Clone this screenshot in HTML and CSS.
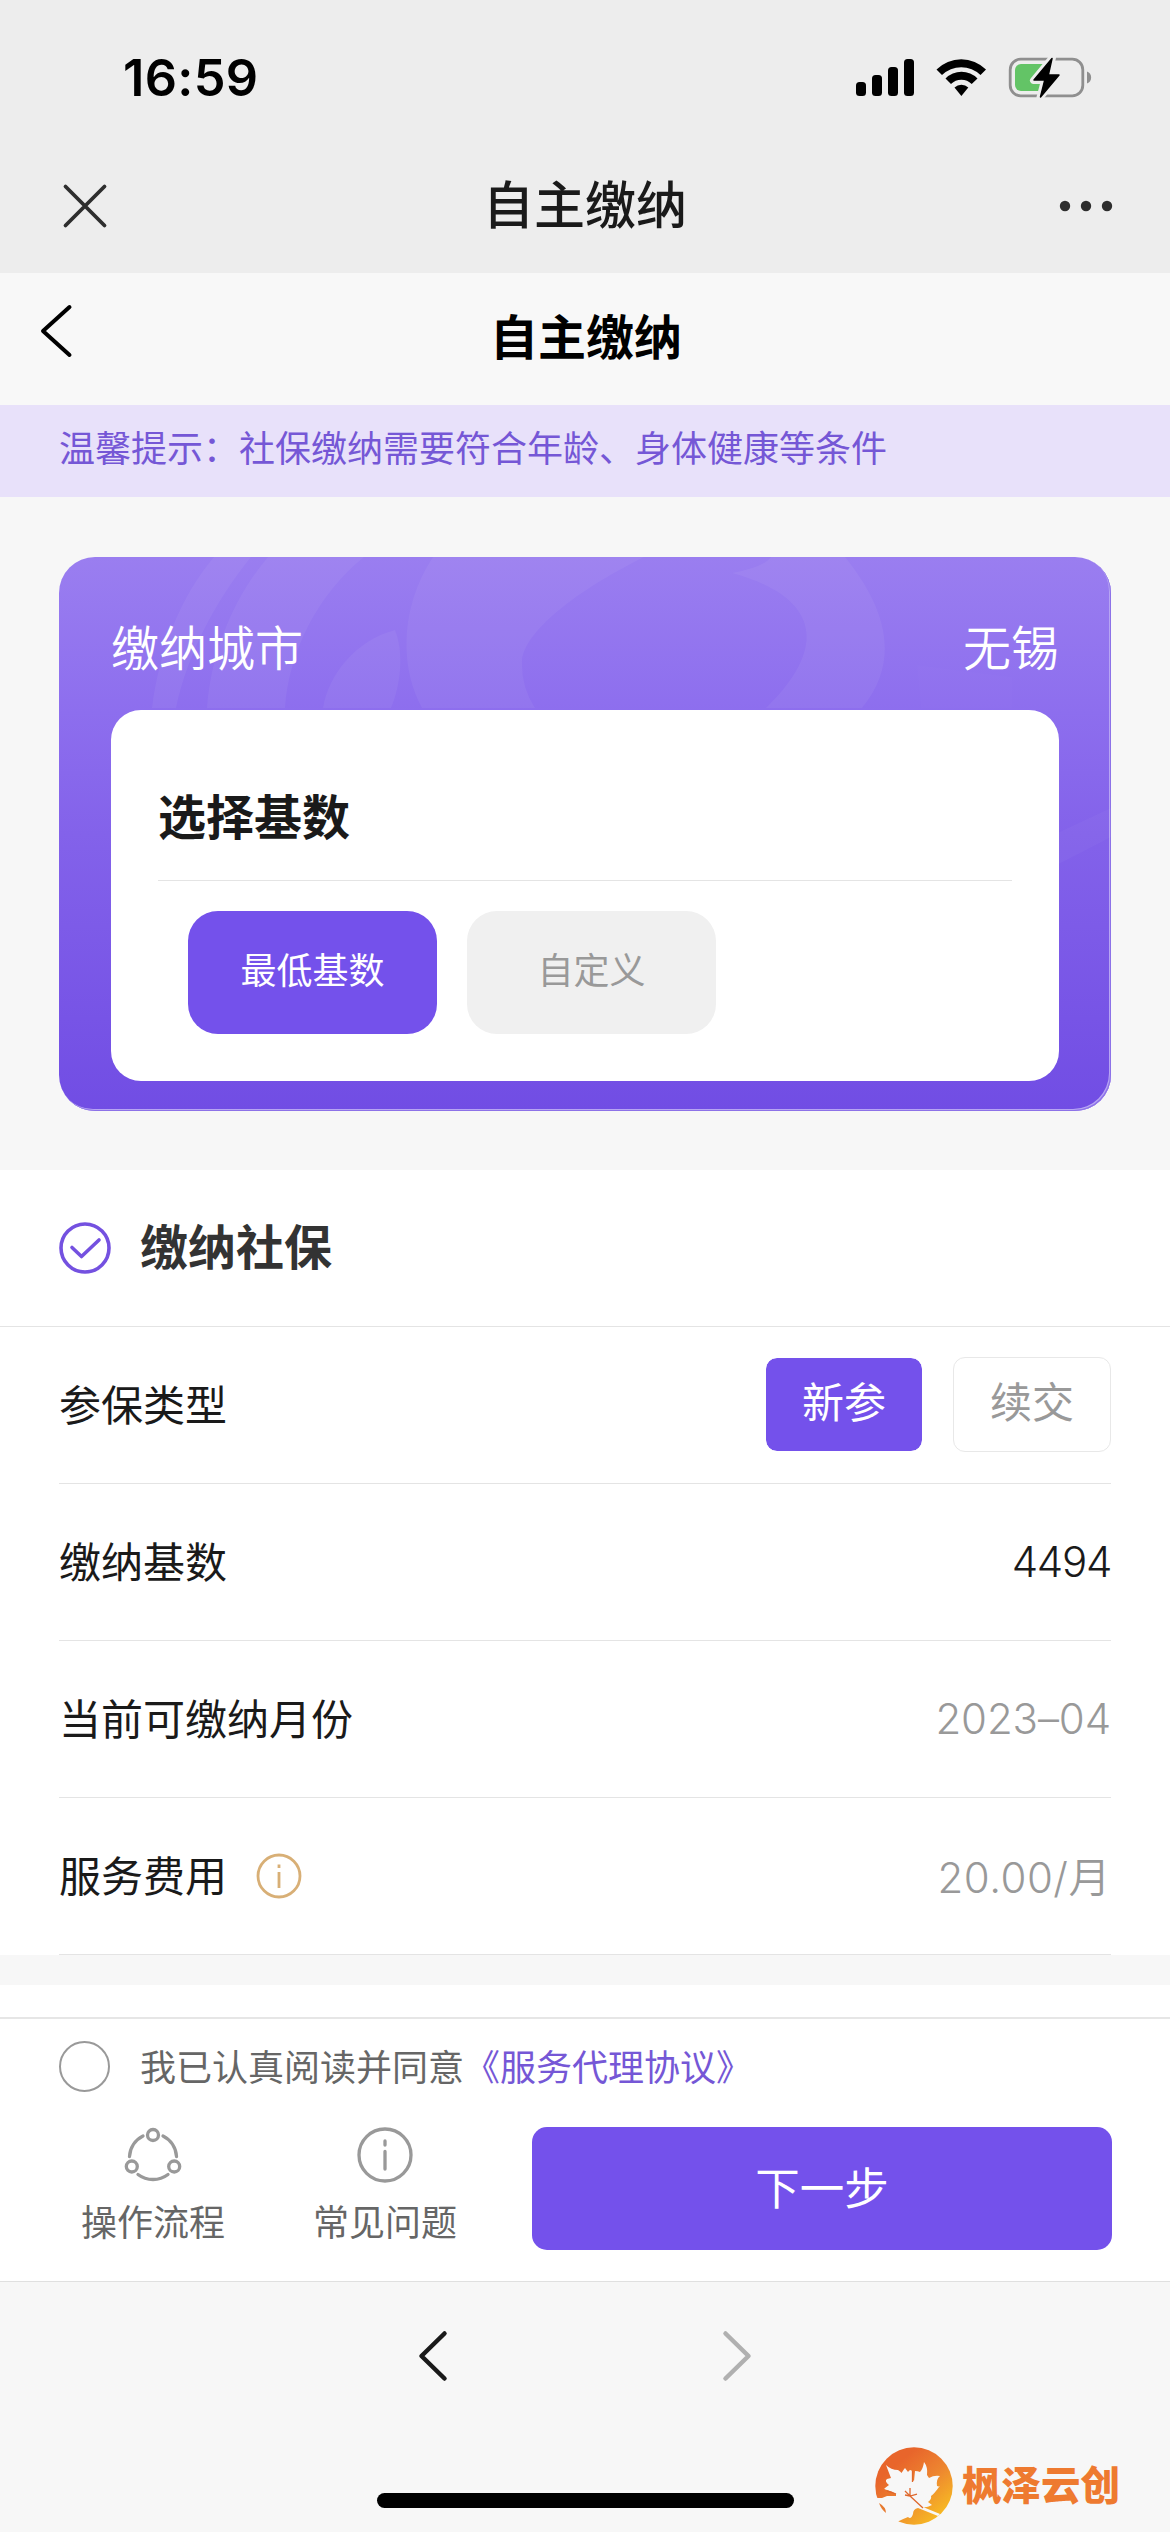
FILE: index.html
```html
<!DOCTYPE html>
<html lang="zh-CN">
<head>
<meta charset="utf-8">
<title>自主缴纳</title>
<link rel="stylesheet" href="styles.css">
</head>
<body>
<div class="screen">
  <header class="top">
    <div class="status">
      <span class="time">16:59</span>
      <svg class="status-icons" width="240" height="48" viewBox="0 0 240 48">
        <rect x="0" y="28" width="10" height="14" rx="3.5"/>
        <rect x="16" y="21" width="10" height="21" rx="3.5"/>
        <rect x="32" y="13" width="10" height="29" rx="3.5"/>
        <rect x="48" y="5" width="10" height="37" rx="3.5"/>
        <path d="M80.500 15.500A35 35 0 0 1 130 15.500L124.500 21A27.500 27.500 0 0 0 86 21Z"/>
        <path d="M89.500 24.500A22.500 22.500 0 0 1 121.500 24.500L115.700 30A14.500 14.500 0 0 0 95 30Z"/>
        <path d="M98.500 33.500A10 10 0 0 1 112.300 33.500L105.400 42Z"/>
        <rect x="154.200" y="5.200" width="72.600" height="36.600" rx="10.500" fill="none" stroke="#8f8f8f" stroke-width="2.800"/>
        <rect x="159" y="10" width="34" height="27" rx="6" fill="#63c466"/>
        <path d="M231 17.500C236.500 19 236.500 28 231 29.500Z" fill="#8f8f8f"/>
        <path d="M196.500 3.500L177.500 26.500H188.500L184 43.500L203.500 20.500H192.500Z" fill="#000" stroke="#ededed" stroke-width="7" stroke-linejoin="round"/>
        <path d="M196 4.500L178 26H188.800L184.500 43L203 21H192.300Z" stroke="#000" stroke-width="1.500" stroke-linejoin="round"/>
      </svg>
    </div>
    <div class="wx-bar">
      <svg class="close" width="48" height="48" viewBox="0 0 48 48"><path d="M4.500 4.500L43.500 43.500M43.500 4.500L4.500 43.500"/></svg>
      <span class="wx-title">自主缴纳</span>
      <svg class="dots" width="56" height="12" viewBox="0 0 56 12"><circle cx="7" cy="6" r="5.200"/><circle cx="28" cy="6" r="5.200"/><circle cx="49" cy="6" r="5.200"/></svg>
    </div>
  </header>
  <nav class="nav">
    <svg class="nav-back" width="34" height="56" viewBox="0 0 34 56"><path d="M30.500 4L4 28L30.500 52"/></svg>
    <span class="nav-title">自主缴纳</span>
  </nav>
  <div class="notice">温馨提示：社保缴纳需要符合年龄、身体健康等条件</div>
  <main class="main">
    <section class="card">
      <svg class="card-art" width="1052" height="554" viewBox="0 0 1052 554">
        <path d="M155 0H192C158 42 129 95 117 151H93C100 95 121 40 155 0Z"/>
        <path d="M209 0H305C258 38 230 95 226 151H148C152 95 175 40 209 0Z"/>
        <path d="M336 73C345 95 342 127 332 151H264C269 118 297 83 336 73Z"/>
        <path d="M374 0H585C525 30 468 70 463 103Q462 130 476 151H363C338 105 344 45 374 0Z"/>
        <path d="M673 16Q705 10 712 0H786C818 40 848 96 803 151H707C764 96 768 42 673 16Z"/>
        <path d="M858 108L953 120V151H862Z" opacity=".25"/>
        <path d="M990 280L1052 251V280L990 312Z" opacity=".6"/>
      </svg>
      <div class="card-head"><span>缴纳城市</span><span>无锡</span></div>
      <div class="panel">
        <h2 class="panel-title">选择基数</h2>
        <div class="options">
          <span class="option option-on">最低基数</span>
          <span class="option">自定义</span>
        </div>
      </div>
    </section>
    <section class="form">
      <div class="form-head">
        <svg width="52" height="52" viewBox="0 0 52 52" class="check"><circle cx="26" cy="26" r="24"/><path d="M13 25.500L22.500 34.500L40 18"/></svg>
        <h2 class="form-title">缴纳社保</h2>
      </div>
      <div class="row"><span class="label">参保类型</span><span class="tags"><span class="tag tag-on">新参</span><span class="tag">续交</span></span></div>
      <div class="row"><span class="label">缴纳基数</span><span class="num dark">4494</span></div>
      <div class="row"><span class="label">当前可缴纳月份</span><span class="num month">2023–04</span></div>
      <div class="row"><span class="fee"><span class="label">服务费用</span>
        <svg class="tip" width="46" height="46" viewBox="0 0 46 46"><circle cx="23" cy="23" r="21"/><path d="M23 11.500V15M23 19V35"/></svg></span><span class="num price">20.00/月</span></div>
    </section>
    <section class="next-block"></section>
  </main>
  <footer class="footer">
    <div class="agree">
      <span class="radio"></span>
      <span class="agree-text">我已认真阅读并同意<a class="link">《服务代理协议》</a></span>
    </div>
    <div class="actions">
      <div class="action">
        <svg width="58" height="56" viewBox="0 0 58 56"><circle cx="29" cy="8" r="5.500"/><circle cx="7.800" cy="39.500" r="5.500"/><circle cx="50.200" cy="39.500" r="5.500"/><path d="M5.500 29.500A24.500 24.500 0 0 1 19 9M39 9A24.500 24.500 0 0 1 52.500 29.500M14 47.500A25 25 0 0 0 44 47.500"/></svg>
        <span>操作流程</span>
      </div>
      <div class="action">
        <svg width="58" height="56" viewBox="0 0 58 56"><circle cx="29" cy="28" r="26"/><path d="M29 14V18M29 24.500V42"/></svg>
        <span>常见问题</span>
      </div>
      <button class="next">下一步</button>
    </div>
  </footer>
  <div class="toolbar">
    <div class="history">
      <svg width="32" height="54" viewBox="0 0 32 54"><path d="M27.500 4.500L4.500 27L27.500 49.500"/></svg>
      <svg class="off" width="32" height="54" viewBox="0 0 32 54"><path d="M4.500 4.500L27.500 27L4.500 49.500"/></svg>
    </div>
    <div class="home"></div>
    <div class="brand">
      <svg width="80" height="80" viewBox="0 0 80 80">
        <defs><linearGradient id="sun" x1=".3" y1=".2" x2=".9" y2=".9"><stop offset="0" stop-color="#e8652b"/><stop offset=".45" stop-color="#ed8530"/><stop offset="1" stop-color="#f8bf22"/></linearGradient></defs>
        <circle cx="40" cy="40" r="38.700" fill="url(#sun)"/>
        <path fill="#f7f7f7" d="M12 19Q17 24 24 24Q27 26 27.500 27Q30 23 31 22L34 26Q35 24 37 24L38.500 26V34L40 35L41 25Q44 25 46 26Q49 23 50 16Q54 21 53 29L55 32Q60 29 66 30Q62 33 63 40Q67 41 66 41H65Q60 48 57 50Q58 53 54 56L58 59Q52 62 49 61L66 68L64 70L44 62Q39 63 39 68Q37 74 34 71Q29 73 25 75L20 79H0V52L8 52L13 50L22 50V48Q19 46 13 44Q9 43 11 42L15 39Q10 35 13 33L17 32Q15 27 12 19Z"/>
        <path fill="#e77a2e" d="M5 57Q12 61 12 67Q7 63 5 57Z"/>
        <path fill="none" stroke="#df682d" stroke-width="1.300" d="M31 45L36 50V42M31 49L36 50L43 48M36 50L49 62M13 45Q17 46 22 48M38.500 25V36"/>
      </svg>
      <span>枫泽云创</span>
    </div>
  </div>
</div>
</body>
</html>
```
FILE: styles.css
```css
* { box-sizing: border-box; }
body {
  margin: 0;
  background: #f7f7f7;
  color: #1a1a1a;
  font-family: Inter, "Noto Sans CJK SC", sans-serif;
}
h2 { margin: 0; }
svg { display: block; flex: none; }
.screen {
  width: 1170px;
  height: 2532px;
  overflow: hidden;
  display: flex;
  flex-direction: column;
}
.top { height: 273px; background: #ededed; }
.status {
  height: 138px;
  padding: 18px 74px 0 123px;
  display: flex;
  align-items: center;
  justify-content: space-between;
}
.time {
  font-size: 50.5px;
  font-weight: 600;
  line-height: 60px;
  letter-spacing: 0.3px;
  color: #000;
  margin-bottom: 1px;
}
.wx-bar {
  height: 135px;
  padding: 0 61px 0 61px;
  display: grid;
  grid-template-columns: 1fr auto 1fr;
  align-items: center;
}
.close { fill: none; stroke: #2e2e2e; stroke-width: 3.8; stroke-linecap: round; }
.wx-title { font-size: 51px; font-weight: 500; line-height: 60px; }
.dots { justify-self: end; margin-right: -5px; fill: #2e2e2e; }
.nav {
  height: 132px;
  padding: 0 39px;
  background: #f8f8f8;
  display: grid;
  grid-template-columns: 1fr auto 1fr;
  align-items: center;
}
.nav-back { fill: none; stroke: #000; stroke-width: 4; stroke-linecap: round; stroke-linejoin: round; margin-bottom: 15px; }
.nav-title { font-size: 48px; font-weight: 700; line-height: 60px; color: #000; margin: 0 0 2px 2px; }
.notice {
  height: 92px;
  padding: 0 59px;
  background: #e8e1fa;
  color: #7557d6;
  font-size: 36px;
  line-height: 89px;
}
.main { height: 1521px; padding-top: 60px; }
.card {
  position: relative;
  width: 1052px;
  height: 554px;
  margin: 0 auto 59px;
  padding: 0 52px;
  border-radius: 36px;
  overflow: hidden;
  background: linear-gradient(#9a7ef0, #8d6eee 28%, #8362ea 50%, #714de4);
  box-shadow: inset -1px -1px 0 #8d72e8, inset -2px -2px 0 #b7a5f3;
}
.card-art { position: absolute; left: 0; top: 0; fill: #fff; fill-opacity: .05; }
.card-head {
  position: relative;
  height: 153px;
  padding-top: 23px;
  display: flex;
  align-items: center;
  justify-content: space-between;
  color: #fff;
  font-size: 48px;
  font-weight: 350;
}
.panel {
  position: relative;
  height: 371px;
  padding: 0 47px;
  border-radius: 30px;
  background: #fff;
}
.panel-title {
  height: 171px;
  padding-top: 73px;
  border-bottom: 1.5px solid #e4e4e4;
  font-size: 48px;
  line-height: 70px;
  font-weight: 600;
}
.options { display: flex; gap: 30px; padding: 30px 30px 0; }
.option {
  width: 249px;
  height: 123px;
  border-radius: 30px;
  background: #f0f0f0;
  color: #999;
  font-size: 36px;
  line-height: 120px;
  text-align: center;
}
.option-on { background: #7451eb; color: #fff; }
.form { background: #fff; height: 785px; }
.form-head {
  height: 157px;
  padding: 0 59px;
  border-bottom: 1.5px solid #e4e4e4;
  display: flex;
  align-items: center;
  gap: 29px;
}
.check { fill: none; stroke: #7451e0; stroke-width: 3.6; stroke-linecap: round; stroke-linejoin: round; }
.form-title { font-size: 48px; font-weight: 700; line-height: 70px; color: #333; }
.row {
  height: 157px;
  margin: 0 59px;
  border-bottom: 1.5px solid #e4e4e4;
  display: flex;
  align-items: center;
  justify-content: space-between;
  font-size: 42px;
}
.label { margin-bottom: 4px; }
.fee { display: flex; align-items: center; gap: 29px; }
.tip { fill: none; stroke: #d8af76; stroke-width: 2.8; }
.num { color: #999; font-weight: 350; }
.dark { color: #1a1a1a; letter-spacing: -1.3px; }
.month { letter-spacing: -0.1px; }
.price { letter-spacing: 0.5px; margin-bottom: 3px; }
.tags { display: flex; gap: 30px; }
.tag {
  width: 158px;
  height: 95px;
  border: 1.5px solid #e8e8e8;
  border-radius: 12px;
  color: #999;
  line-height: 90px;
  text-align: center;
}
.tag-on { border-color: #fff; background: #7451eb; background-clip: padding-box; color: #fff; }
.next-block { height: 40px; margin-top: 30px; background: #fff; }
.footer {
  height: 265px;
  margin-top: -1px;
  position: relative;
  background: #fff;
  border-top: 2px solid #e6e6e6;
  color: #666;
  font-size: 36px;
}
.agree { display: flex; align-items: center; gap: 30px; height: 95px; padding: 0 59px; }
.agree-text { margin-bottom: 3px; }
.radio { width: 51px; height: 51px; border: 2px solid #999; border-radius: 50%; }
.link { color: #7557d6; }
.actions { display: flex; padding: 13px 58px 0 37px; }
.action {
  width: 232px;
  display: flex;
  flex-direction: column;
  align-items: center;
  line-height: 52px;
}
.action span { margin-top: 14px; }
.action svg { fill: none; stroke: #999; stroke-width: 3.3; stroke-linecap: round; }
.next {
  width: 580px;
  height: 123px;
  margin-left: auto;
  padding: 0 0 5px;
  border: 0;
  border-radius: 15px;
  background: #7451eb;
  color: #fff;
  font: 400 44.5px "Noto Sans CJK SC", sans-serif;
}
.toolbar {
  position: relative;
  height: 251px;
  border-top: 1.5px solid #e0e0e0;
  background: #f7f7f7;
}
.history { display: flex; justify-content: center; gap: 272px; padding-top: 47px; }
.history svg { fill: none; stroke: #1a1a1a; stroke-width: 4.5; stroke-linecap: round; stroke-linejoin: round; }
.history .off { stroke: #b0b0b0; }
.home { width: 417px; height: 15px; margin: 110px auto 0; border-radius: 8px; background: #000; }
.brand {
  position: absolute;
  left: 874px;
  top: 164px;
  display: flex;
  align-items: center;
  gap: 8px;
  color: #ee7a30;
  font-size: 39.5px;
  font-weight: 900;
  line-height: 60px;
}
.brand span { margin-bottom: 1px; }
```
